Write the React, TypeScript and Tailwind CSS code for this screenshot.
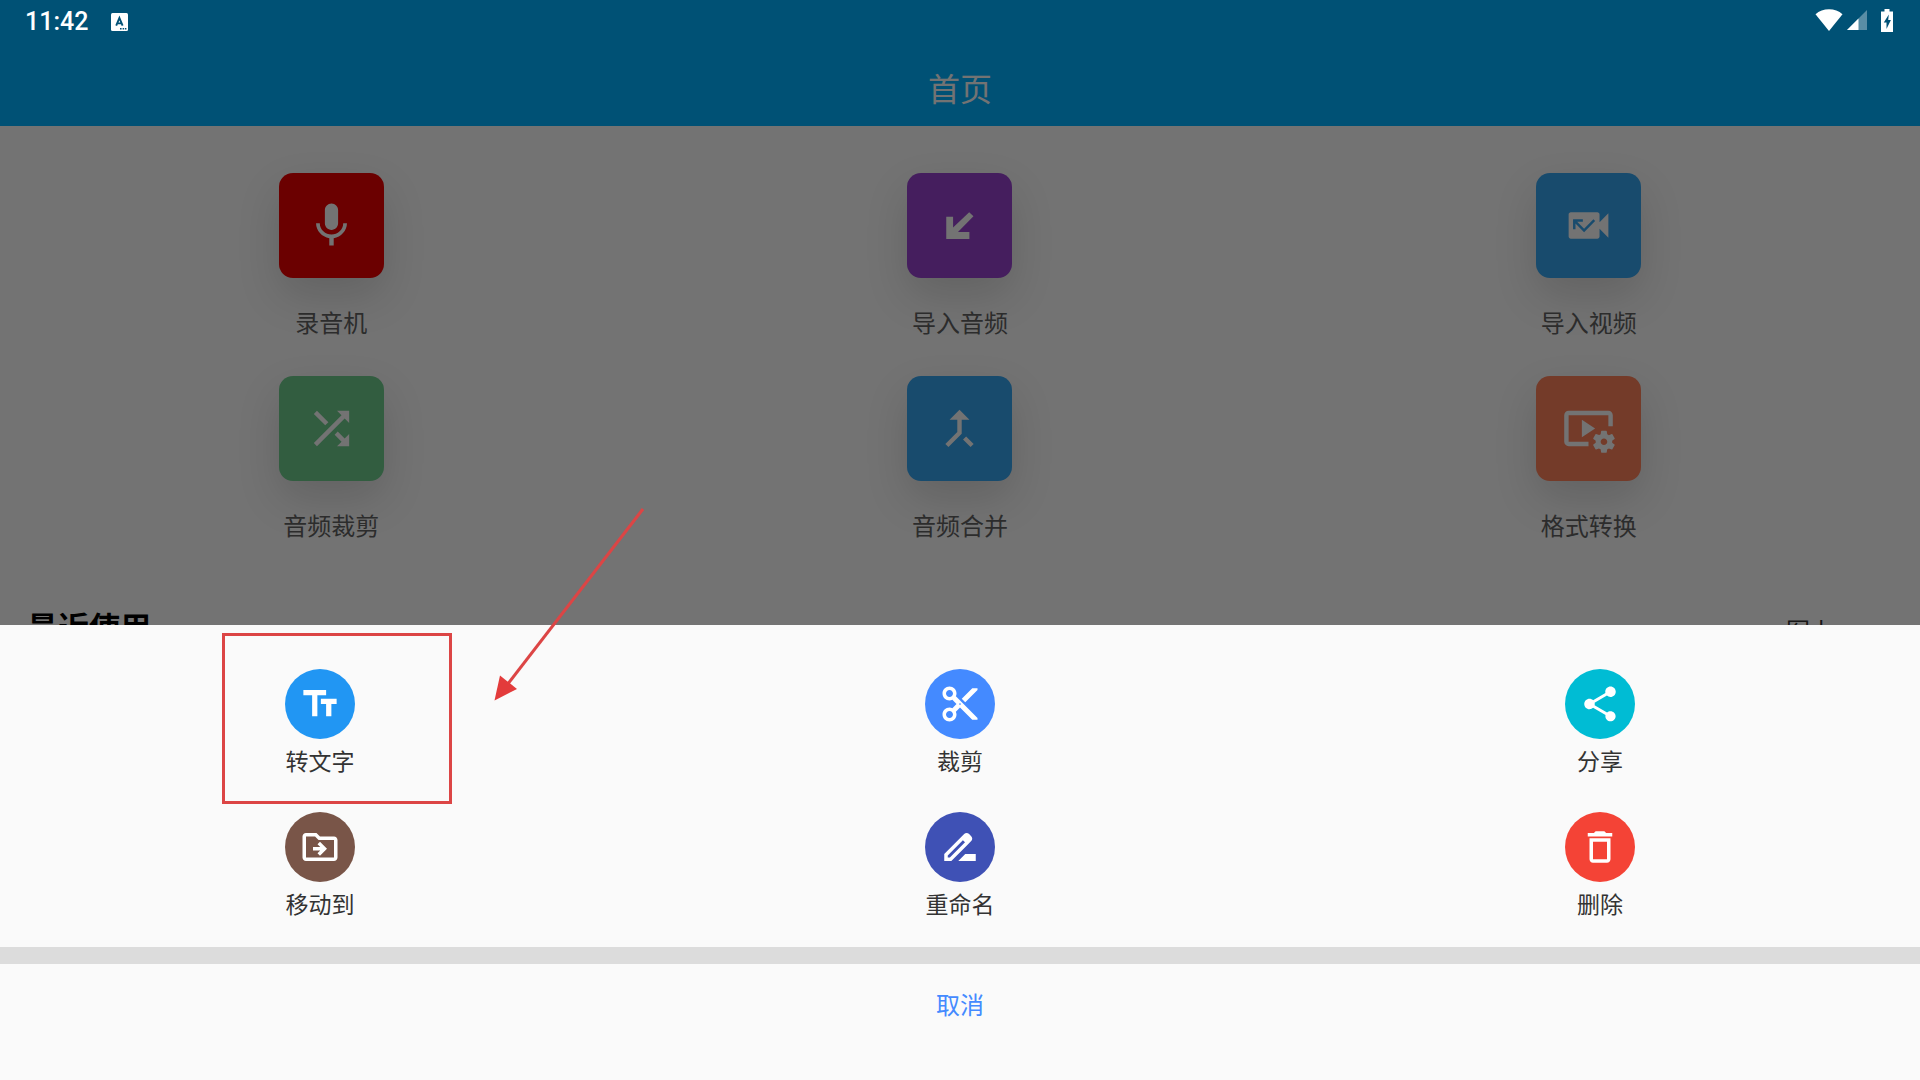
import type { IconType } from "react-icons";
import {
  MdCallMerge,
  MdContentCut,
  MdDeleteOutline,
  MdDriveFileRenameOutline,
  MdMic,
  MdMissedVideoCall,
  MdOutlineDriveFileMove,
  MdShare,
  MdShuffle,
  MdTextFields,
  MdVideoSettings
} from "react-icons/md";

type Item = {
  label: string;
  color: string;
  icon: IconType;
};

const tools: Item[] = [
  { label: "录音机", color: "bg-[#e90000]", icon: MdMic },
  { label: "导入音频", color: "bg-[#9643cc]", icon: ArrowIn },
  { label: "导入视频", color: "bg-[#36a3ed]", icon: MdMissedVideoCall },
  { label: "音频裁剪", color: "bg-[#6dca8d]", icon: MdShuffle },
  { label: "音频合并", color: "bg-[#36a3ed]", icon: MdCallMerge },
  { label: "格式转换", color: "bg-[#fc805b]", icon: MdVideoSettings }
];

const actions: Item[] = [
  { label: "转文字", color: "bg-[#2196f3]", icon: MdTextFields },
  { label: "裁剪", color: "bg-[#448aff]", icon: MdContentCut },
  { label: "分享", color: "bg-[#00bcd4]", icon: MdShare },
  { label: "移动到", color: "bg-[#795548]", icon: MdOutlineDriveFileMove },
  { label: "重命名", color: "bg-[#3f51b5]", icon: MdDriveFileRenameOutline },
  { label: "删除", color: "bg-[#f44336]", icon: MdDeleteOutline }
];

function ArrowIn({ className }: { className?: string }) {
  return (
    <svg viewBox="0 0 52 52" fill="currentColor" className={className}>
      <path d="M13 17.3h6.7V28L35.5 13l4.2 4-15.2 15.3h11.2v7H13z" />
    </svg>
  );
}

function StatusBar() {
  return (
    <div className="absolute inset-x-0 top-0 z-20 flex h-11 items-center justify-between pr-[27px] pl-[25px] text-white">
      <div className="flex items-center gap-[23px]">
        <span className="font-[Roboto,sans-serif] text-[25px] leading-8 font-medium">11:42</span>
        <svg width="17" height="18" viewBox="0 0 17 18">
          <rect width="17" height="18" rx="1.5" fill="#fff" />
          <path d="M5.2 12.6 8.4 5l3.2 7.6M6.2 10.4h4.4" fill="none" stroke="#005176" strokeWidth="1.9" />
          <path d="M9 15h1.6v1.6H9zM11.6 15h1.6v1.6h-1.6zM14 15h1.4v1.6H14z" fill="#005176" />
        </svg>
      </div>
      <div className="flex items-center pb-1">
        <svg width="28" height="22" viewBox="0 0 28 22" fill="#fff">
          <path d="M14 22 .5 5.2C4 1.8 9 .2 14 .2s10 1.6 13.5 5z" />
        </svg>
        <svg width="20" height="20" viewBox="0 0 20 20" className="ml-1">
          <path d="M20 0v20H0z" fill="#fff" opacity=".35" />
          <path d="M11.5 8.5V20H0z" fill="#fff" />
        </svg>
        <svg width="12" height="23" viewBox="0 0 12 23" className="ml-[14px]">
          <path d="M3.5 0h5v2.5H12V23H0V2.5h3.5z" fill="#fff" />
          <path d="M7.8 5.5 2.8 13.5h2.7V20L9.9 11H7.2z" fill="#005176" />
        </svg>
      </div>
    </div>
  );
}

function ToolTile({ label, color, icon: Icon }: Item) {
  return (
    <button type="button" className="flex flex-col items-center">
      <span className={`flex size-[105px] items-center justify-center rounded-[14px] shadow-[0_18px_44px_rgba(0,0,0,0.14)] ${color}`}>
        <Icon className="size-[53px] text-[#fafafa]" />
      </span>
      <span className="mt-[26px] text-2xl leading-9 text-[#616161]">{label}</span>
    </button>
  );
}

function SheetAction({ label, color, icon: Icon }: Item) {
  return (
    <button type="button" className="flex flex-col items-center gap-1">
      <span className={`flex size-[70px] items-center justify-center rounded-full ${color}`}>
        <Icon className="size-[42px] text-white" />
      </span>
      <span className="text-[23px] leading-[34px] text-[#333333]">{label}</span>
    </button>
  );
}

function ActionSheet() {
  return (
    <div role="dialog" aria-label="操作" className="absolute inset-x-0 bottom-0 z-10 bg-[#fafafa]">
      <div className="grid grid-cols-3 justify-items-center gap-y-[35px] pt-11 pb-[27px]">
        {actions.map((item) => (
          <SheetAction key={item.label} {...item} />
        ))}
      </div>
      <div className="h-[17px] bg-[#dcdcdc]" />
      <div className="pb-9">
        <button type="button" className="h-20 w-full text-2xl text-[#448aff]">
          取消
        </button>
      </div>
      {/* highlight around the first action, with an arrow pointing at it */}
      <div className="absolute top-2 left-[222px] h-[171px] w-[230px] border-3 border-[#dc4545]" />
      <svg width="160" height="200" viewBox="0 0 160 200" className="absolute -top-[120px] left-[490px]">
        <path d="M153 4 17 180" stroke="#dc4545" strokeWidth="3" />
        <path d="m4.5 195.5 5.5-25 17 13.5z" fill="#e33b3b" />
      </svg>
    </div>
  );
}

export default function App() {
  return (
    <div className="relative h-screen overflow-hidden bg-[#fafafa] font-['Noto_Sans_CJK_SC',sans-serif]">
      <StatusBar />
      <header className="bg-[#00b0ff] pt-[50px] pb-0.5">
        <h1 className="flex h-[74px] items-center justify-center text-[32px] text-[#fafafa]">首页</h1>
      </header>
      <main>
        <div className="grid grid-cols-3 justify-items-center gap-y-9 px-[17px] pt-[47px]">
          {tools.map((item) => (
            <ToolTile key={item.label} {...item} />
          ))}
        </div>
        <div className="mt-[60px] flex items-end justify-between pr-[86px] pl-[27px]">
          <h2 className="text-[31px] leading-[46px] font-bold text-black">最近使用</h2>
          <a href="#all" className="text-2xl leading-[38px] text-[#333333]">
            图上
          </a>
        </div>
      </main>
      <div className="absolute inset-0 bg-black/54" />
      <ActionSheet />
    </div>
  );
}
